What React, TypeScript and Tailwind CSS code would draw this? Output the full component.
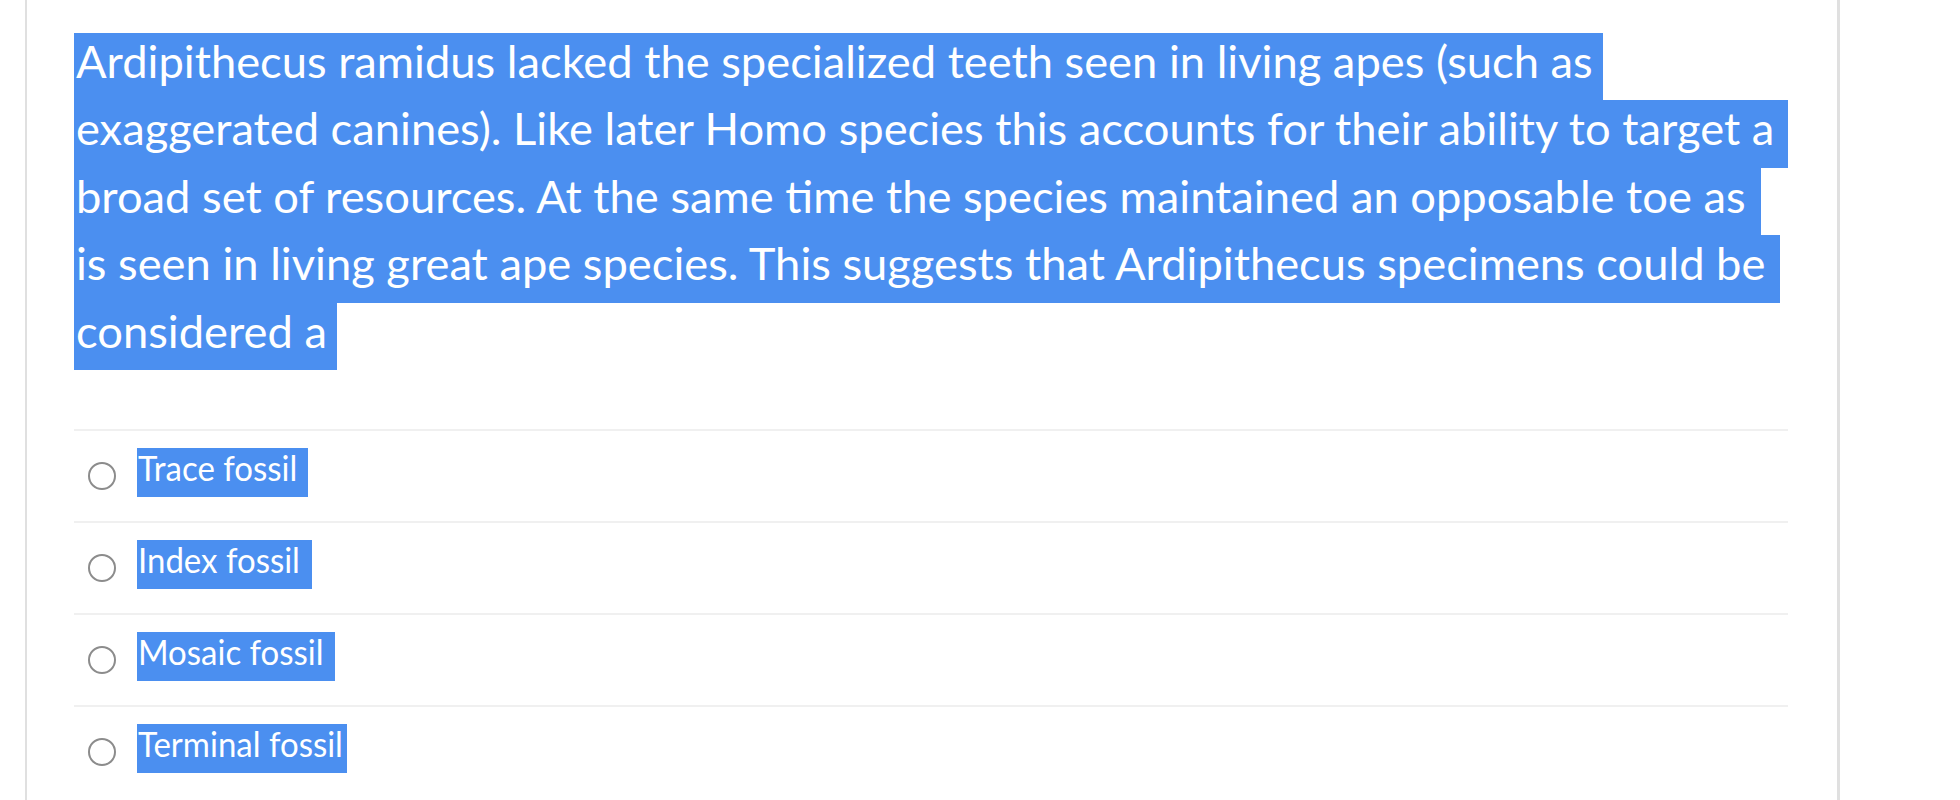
import React from "react";

const lines = [
  { text: "Ardipithecus ramidus lacked the specialized teeth seen in living apes (such as", w: "w-[1529px]" },
  { text: "exaggerated canines). Like later Homo species this accounts for their ability to target a", w: "w-[1714px]" },
  { text: "broad set of resources. At the same time the species maintained an opposable toe as", w: "w-[1687px]" },
  { text: "is seen in living great ape species. This suggests that Ardipithecus specimens could be", w: "w-[1706px]" },
  { text: "considered a", w: "w-[263px]" },
];

const options = [
  { label: "Trace fossil", w: "w-[171px]" },
  { label: "Index fossil", w: "w-[175px]" },
  { label: "Mosaic fossil", w: "w-[198px]" },
  { label: "Terminal fossil", w: "w-[210px]" },
];

export default function App() {
  return (
    <div className="min-h-[800px] bg-white pl-[25px] font-[Lato,sans-serif] overflow-hidden">
      <div className="w-[1815px] min-h-[800px] border-l-2 border-r-[3px] border-[#e0e0e0] pl-[47px] pt-[33px]">
        <div className="flex flex-col">
          {lines.map((l, i) => (
            <div
              key={i}
              className={`${l.w} h-[67.4px] leading-[55px] bg-[#4b8ff0] text-white text-[45.3px] whitespace-nowrap pl-[2px]`}
            >
              {l.text}
            </div>
          ))}
        </div>
        <div className="mt-[59px] w-[1714px] flex flex-col">
          {options.map((o, i) => (
            <div
              key={i}
              className="h-[92px] border-t-2 border-[#f0f0f0] flex items-center pl-[14px] gap-[21px]"
            >
              <span className="w-[28px] h-[28px] rounded-full border-2 border-[#8c8c8c] bg-white shrink-0" />
              <span
                className={`${o.w} h-[49px] leading-[40px] bg-[#4b8ff0] text-white text-[34px] whitespace-nowrap mb-[6px] pl-[1px]`}
              >
                <span className="inline-block origin-left scale-x-[0.97]">{o.label}</span>
              </span>
            </div>
          ))}
        </div>
      </div>
    </div>
  );
}
